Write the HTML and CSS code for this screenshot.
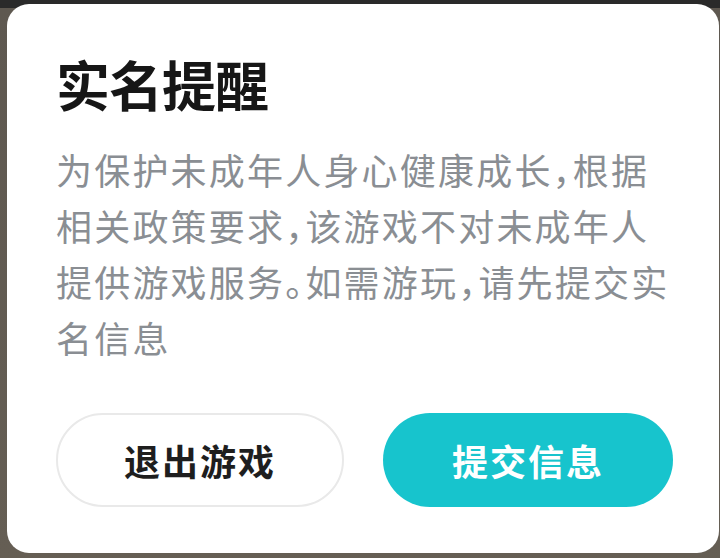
FILE: index.html
```html
<!DOCTYPE html>
<html lang="zh-CN">
<head>
<meta charset="utf-8">
<title>实名提醒</title>
<link rel="stylesheet" href="styles.css">
</head>
<body>
<div class="backdrop">
  <div class="dialog">
    <h1 class="title">实名提醒</h1>
    <p class="message">为保护未成年人身心健康成长，根据相关政策要求，该游戏不对未成年人提供游戏服务。如需游玩，请先提交实名信息</p>
    <div class="actions">
      <button class="btn btn-quit">退出游戏</button>
      <button class="btn btn-submit">提交信息</button>
    </div>
  </div>
</div>
</body>
</html>
```

FILE: styles.css
```css
html, body {
  margin: 0;
  padding: 0;
}

body {
  width: 720px;
  height: 558px;
  overflow: hidden;
  background: linear-gradient(to bottom, #2a2a2a 0, #2a2a2a 8px, #5e5850 8px, #655e54 100%);
  font-family: "Noto Sans CJK SC", "Noto Sans", sans-serif;
}

.backdrop {
  padding: 4px 1px 0 7px;
}

.dialog {
  box-sizing: border-box;
  width: 712px;
  height: 549px;
  background: #ffffff;
  border-radius: 22px;
  padding: 49px 46px 46px 49px;
  display: flex;
  flex-direction: column;
}

.title {
  margin: 0;
  font-size: 54px;
  line-height: 62px;
  font-weight: 700;
  letter-spacing: -1px;
  color: #161616;
}

.message {
  margin: 26px 0 0 0;
  font-size: 36px;
  line-height: 56px;
  letter-spacing: 2.2px;
  color: #8a8e93;
  font-feature-settings: "halt";
}

.actions {
  margin-top: auto;
  display: flex;
  gap: 39px;
}

.btn {
  box-sizing: border-box;
  height: 94px;
  border-radius: 47px;
  font-family: "Noto Sans CJK SC", "Noto Sans", sans-serif;
  font-size: 36px;
  font-weight: 700;
  letter-spacing: 2px;
  padding: 0;
  cursor: pointer;
}

.btn-quit {
  width: 288px;
  background: #ffffff;
  border: 2px solid #e9e9e9;
  color: #1e1e1e;
}

.btn-submit {
  width: 290px;
  background: #17c4cd;
  border: none;
  color: #ffffff;
}
```
